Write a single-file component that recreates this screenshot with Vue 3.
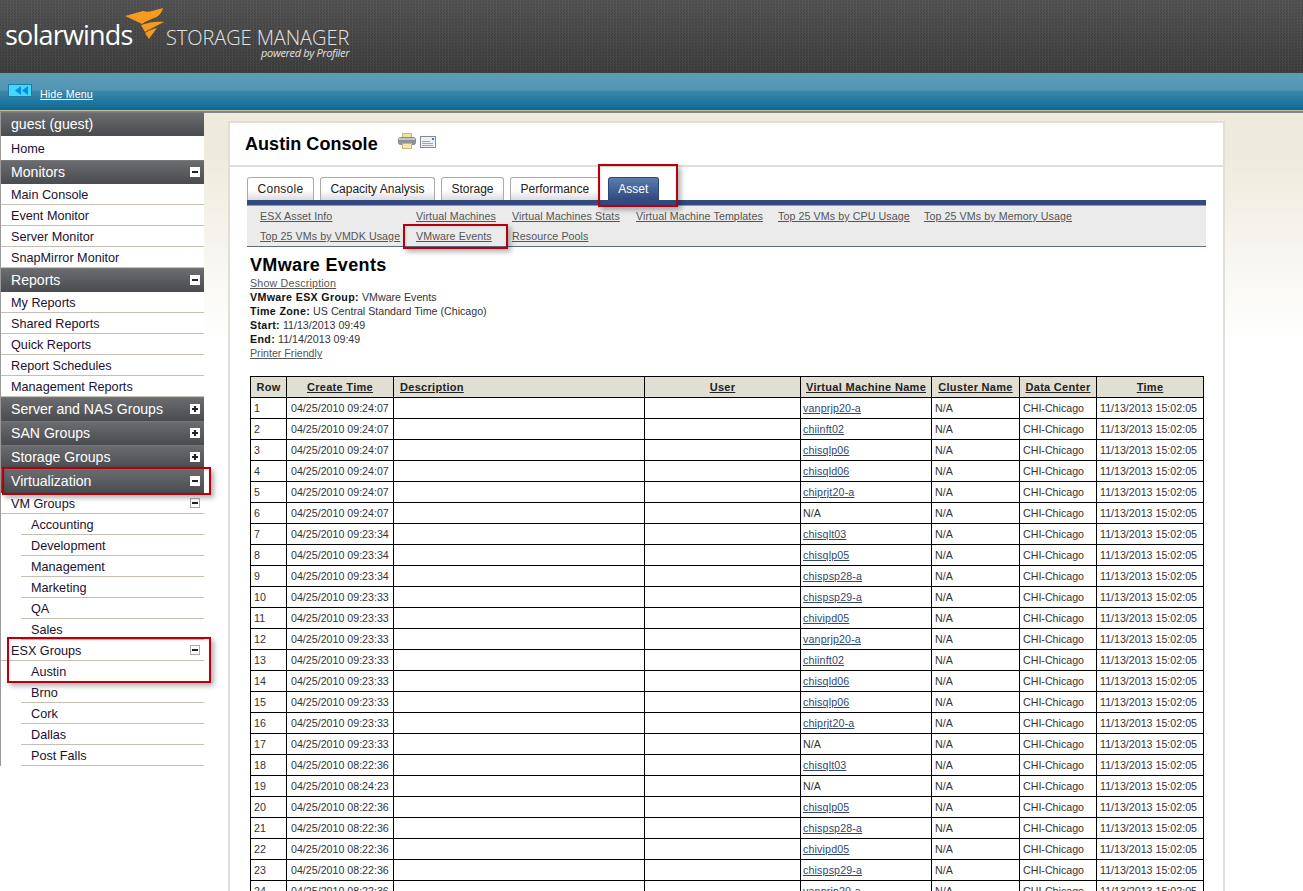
<script setup>
const monitors = ['Main Console', 'Event Monitor', 'Server Monitor', 'SnapMirror Monitor']
const reports = ['My Reports', 'Shared Reports', 'Quick Reports', 'Report Schedules', 'Management Reports']
const collapsed = ['Server and NAS Groups', 'SAN Groups', 'Storage Groups']
const vmGroups = ['Accounting', 'Development', 'Management', 'Marketing', 'QA', 'Sales']
const esxGroups = ['Austin', 'Brno', 'Cork', 'Dallas', 'Post Falls']
const tabs = ['Console', 'Capacity Analysis', 'Storage', 'Performance']
const subnav = [
  'ESX Asset Info', 'Virtual Machines', 'Virtual Machines Stats', 'Virtual Machine Templates', 'Top 25 VMs by CPU Usage', 'Top 25 VMs by Memory Usage',
  'Top 25 VMs by VMDK Usage', 'VMware Events', 'Resource Pools'
]
const heads = [
  { t: 'Row', plain: true },
  { t: 'Create Time' },
  { t: 'Description', left: true },
  { t: 'User' },
  { t: 'Virtual Machine Name' },
  { t: 'Cluster Name' },
  { t: 'Data Center' },
  { t: 'Time' }
]
const rows = [
  ['09:24:07', 'vanprjp20-a'], ['09:24:07', 'chiinft02'], ['09:24:07', 'chisqlp06'], ['09:24:07', 'chisqld06'],
  ['09:24:07', 'chiprjt20-a'], ['09:24:07', 'N/A'], ['09:23:34', 'chisqlt03'], ['09:23:34', 'chisqlp05'],
  ['09:23:34', 'chispsp28-a'], ['09:23:33', 'chispsp29-a'], ['09:23:33', 'chivipd05'], ['09:23:33', 'vanprjp20-a'],
  ['09:23:33', 'chiinft02'], ['09:23:33', 'chisqld06'], ['09:23:33', 'chisqlp06'], ['09:23:33', 'chiprjt20-a'],
  ['09:23:33', 'N/A'], ['08:22:36', 'chisqlt03'], ['08:24:23', 'N/A'], ['08:22:36', 'chisqlp05'],
  ['08:22:36', 'chispsp28-a'], ['08:22:36', 'chivipd05'], ['08:22:36', 'chispsp29-a'], ['08:22:36', 'vanprjp20-a']
]
</script>

<template>
  <div class="page">
    <header class="brand">
      <div class="logo">
        <span class="wordmark">solarwinds</span>
        <svg class="flame" width="42" height="34" viewBox="0 0 42 34">
          <path fill="#f79a1d" d="M0 8 L18 3 C22 4 24 4 27 3 L38 0 C37 5 33 9 29 10 C25 12 21 13 17 16 C11 13 5 10 0 8Z" />
          <path fill="#f79a1d" d="M16 17 C24 14 32 13 39 14 C33 17 27 20 20 24 Z" />
          <path fill="#f79a1d" d="M20 25 C25 22 28 21 32 20 C29 24 26 28 24 31 Z" />
        </svg>
        <div class="product">
          <span class="product-name">STORAGE MANAGER</span>
          <span class="powered">powered by Profiler</span>
        </div>
      </div>
    </header>
    <div class="menubar">
      <span class="arrows">
        <svg width="24" height="13" viewBox="0 0 24 13">
          <rect x="0.5" y="0.5" width="23" height="12" fill="#44d8ff" stroke="#1a7fa8" />
          <path fill="#0a8fe0" d="M7 6.5 L13 2 V11Z M14 6.5 L20 2 V11Z" />
        </svg>
      </span>
      <a class="hide">Hide Menu</a>
    </div>
    <div class="rule"></div>

    <div class="main">
      <aside class="side">
        <div class="sec">guest (guest)</div>
        <div class="home">Home</div>
        <div class="sec">Monitors<i class="box"><b></b></i></div>
        <div v-for="m in monitors" :key="m" class="item">{{ m }}</div>
        <div class="sec">Reports<i class="box"><b></b></i></div>
        <div v-for="r in reports" :key="r" class="item">{{ r }}</div>
        <div v-for="c in collapsed" :key="c" class="sec">{{ c }}<i class="box plus"><b></b></i></div>
        <div class="sec">Virtualization<i class="box"><b></b></i></div>
        <div class="item group">VM Groups<i class="box light"><b></b></i></div>
        <div v-for="g in vmGroups" :key="g" class="item sub">{{ g }}</div>
        <div class="item group">ESX Groups<i class="box light"><b></b></i></div>
        <div v-for="g in esxGroups" :key="g" class="item sub">{{ g }}</div>
      </aside>

      <section class="card">
        <div class="card-head">
          <h1>Austin Console</h1>
          <svg class="ico-print" width="18" height="16" viewBox="0 0 18 16">
            <rect x="4.5" y="0.5" width="9" height="5" fill="#efe2a0" stroke="#c9b878" />
            <rect x="0.5" y="4.5" width="17" height="7" rx="2" fill="#8f9298" stroke="#8a8a8e" />
            <rect x="1" y="5" width="16" height="2" fill="#c2c4c8" />
            <rect x="4.5" y="10.5" width="9" height="5" fill="#f3e8b0" stroke="#c9b878" />
          </svg>
          <svg class="ico-mail" width="16" height="12" viewBox="0 0 16 12">
            <rect x="0.5" y="0.5" width="15" height="11" fill="#eef1f4" stroke="#7f8a9a" />
            <rect x="12" y="2" width="2" height="2" fill="#3f78c8" />
            <path stroke="#a0a8b0" fill="none" d="M2 5.5H10M2 7.5H13M2 9.5H13" />
          </svg>
        </div>
        <div class="card-body">
          <nav class="tabs">
            <span v-for="t in tabs" :key="t" class="tab">{{ t }}</span>
            <span class="tab on">Asset</span>
          </nav>
          <div class="tabline"></div>
          <div class="subnav">
            <a v-for="s in subnav" :key="s">{{ s }}</a>
          </div>
          <div class="report">
            <h2>VMware Events</h2>
            <a class="lnk first">Show Description</a>
            <p><b>VMware ESX Group:</b> VMware Events</p>
            <p><b>Time Zone:</b> US Central Standard Time (Chicago)</p>
            <p><b>Start:</b> 11/13/2013 09:49</p>
            <p><b>End:</b> 11/14/2013 09:49</p>
            <a class="lnk">Printer Friendly</a>
          </div>
          <table class="grid">
            <colgroup>
              <col style="width:36px" /><col style="width:107px" /><col style="width:251px" /><col style="width:156px" />
              <col style="width:131px" /><col style="width:88px" /><col style="width:77px" /><col style="width:107px" />
            </colgroup>
            <thead>
              <tr>
                <th v-for="h in heads" :key="h.t" :class="{ left: h.left, plain: h.plain }"><span>{{ h.t }}</span></th>
              </tr>
            </thead>
            <tbody>
              <tr v-for="(r, i) in rows" :key="i">
                <td>{{ i + 1 }}</td>
                <td class="date">04/25/2010 {{ r[0] }}</td>
                <td></td>
                <td></td>
                <td class="vmcell"><a v-if="r[1] !== 'N/A'" class="vm">{{ r[1] }}</a><template v-else>N/A</template></td>
                <td>N/A</td>
                <td>CHI-Chicago</td>
                <td>11/13/2013 15:02:05</td>
              </tr>
            </tbody>
          </table>
        </div>
      </section>
    </div>

    <div class="mark m-asset"></div>
    <div class="mark m-events"></div>
    <div class="mark m-virt"></div>
    <div class="mark m-esx"></div>
  </div>
</template>

<style>
html, body { margin: 0; overflow: hidden; background: #fff; }
</style>

<style scoped>
.page {
  position: relative;
  width: 1303px;
  height: 891px;
  overflow: hidden;
  font-family: "Liberation Sans", Arial, sans-serif;
  color: #222;
  background: #fff;
}
.brand {
  height: 73px;
  box-sizing: border-box;
  background:
    conic-gradient(rgba(255,255,255,.04) 25%, rgba(0,0,0,.05) 0 50%, rgba(255,255,255,.04) 0 75%, rgba(0,0,0,.05) 0) 0 0 / 3px 3px,
    linear-gradient(#505050, #3a3a3a);
  padding: 8px 0 0 5px;
}
.logo { display: flex; align-items: flex-start; position: relative; height: 60px; }
.wordmark {
  font-family: "Open Sans", sans-serif;
  font-size: 27px;
  line-height: 32px;
  color: #fff;
  margin-top: 11px;
  width: 127px;
  letter-spacing: -.8px;
}
.flame { position: absolute; left: 120px; top: 0; }
.product { display: flex; flex-direction: column; align-items: flex-end; margin: 21px 0 0 34px; color: #e2e2e2; }
.product-name { font-family: "Open Sans", sans-serif; font-size: 20px; line-height: 18px; letter-spacing: -.08px; font-weight: 300; }
.powered { font-family: "Open Sans", sans-serif; font-style: italic; font-size: 11px; line-height: 12px; letter-spacing: -.35px; }

.menubar {
  height: 37px;
  box-sizing: border-box;
  background: linear-gradient(#5c9cb9 0, #5295b3 17px, #3e87a8 18px, #0b6a96 100%);
  display: flex;
  align-items: flex-start;
  padding: 11px 0 0 8px;
}
.arrows { display: block; height: 13px; }
.arrows svg { display: block; }
.hide { color: #fff; font-size: 10.67px; text-decoration: underline; margin: 4px 0 0 8px; line-height: 12px; letter-spacing: .15px; }
.rule { height: 3px; background: linear-gradient(#c2bc98 0 1px, #85858c 1px); }

.main {
  display: flex;
  align-items: flex-start;
  height: 778px;
  background: linear-gradient(#eeebdd 0, #eeebdd 40px, #fff 230px);
}
.side {
  width: 203px;
  border-left: 1px solid #9a9a9a;
  background: #fff;
  flex: none;
  margin-top: -1px;
}
.sec {
  position: relative;
  height: 24px;
  box-sizing: border-box;
  padding-left: 10px;
  font-size: 14.1px;
  line-height: 22px;
  color: #fff;
  background: linear-gradient(#6a6c70, #4a4b4e);
  border-top: 1px solid #777;
}
.home { height: 24px; line-height: 26px; padding-left: 10px; font-size: 12.67px; background: #fff; color: #1c1030; }
.item {
  position: relative;
  height: 21px;
  box-sizing: border-box;
  line-height: 22px;
  font-size: 12.67px;
  padding-left: 10px;
  border-bottom: 1px solid #c4bfb2;
  color: #1c1030;
}
.sub { margin-left: 20px; padding-left: 10px; }
.box {
  position: absolute;
  right: 4px;
  top: 6px;
  width: 10px;
  height: 10px;
  background: #fff;
  display: block;
}
.box b { position: absolute; left: 2px; top: 4px; width: 6px; height: 2px; background: #222; }
.plus::after { content: ""; position: absolute; left: 4px; top: 2px; width: 2px; height: 6px; background: #222; }
.light { top: 5px; box-sizing: border-box; width: 10px; height: 10px; border: 1px solid #aaa; }
.light b { left: 1px; top: 3px; }

.card {
  margin: 8px 0 0 24px;
  width: 993px;
  height: 800px;
  flex: none;
  background: #fff;
  border: 2px solid #dfdfd8;
  border-bottom: 0;
}
.card-head {
  height: 42px;
  border-bottom: 2px solid #dfdfd8;
  display: flex;
  align-items: flex-start;
  padding-left: 15px;
}
h1 { margin: 10px 0 0; font-size: 18px; line-height: 22px; font-weight: bold; color: #000; letter-spacing: .05px; }
.ico-print { margin: 10px 0 0 20px; }
.ico-mail { margin: 13px 0 0 4px; }
.card-body { padding: 10px 17px 0 17px; }
.tabs { display: flex; height: 23px; align-items: flex-end; }
.tab {
  height: 23px;
  box-sizing: border-box;
  margin-right: 6px;
  padding: 0 9.5px;
  font-size: 12px;
  line-height: 22px;
  color: #222;
  border: 1px solid #aaa;
  border-bottom: 0;
  border-radius: 3px 3px 0 0;
  background: linear-gradient(#fff, #fff 55%, #dcdcdc);
}
.tab:first-child { letter-spacing: .27px; }
.tab.on {
  margin-left: 2px;
  color: #fff;
  border-color: #2d4878;
  background: linear-gradient(#5a7cae, #30497f);
}
.tabline { height: 5px; background: #324a80; border-bottom: 1px solid #8f99ad; }
.subnav {
  height: 41px;
  box-sizing: border-box;
  background: #ebebeb;
  border-bottom: 1px solid #5e6b80;
  display: grid;
  grid-template-columns: 156px 96px 124px 142px 146px auto;
  grid-auto-rows: 20px;
  padding: 0 0 0 13px;
  font-size: 10.67px;
  line-height: 20px;
  letter-spacing: .09px;
  color: #555;
}
.subnav a { text-decoration: underline; white-space: nowrap; }
.report { padding: 9px 0 0 3px; font-size: 10.67px; line-height: 14px; height: 129px; box-sizing: border-box; color: #33333a; }
h2 { margin: 0; font-size: 18px; line-height: 18px; font-weight: bold; color: #000; letter-spacing: .35px; }
.lnk { display: block; text-decoration: underline; color: #555; }
.lnk.first { margin-top: 2px; letter-spacing: .2px; }
.report p { margin: 0; }
.report b { color: #111; letter-spacing: .35px; }
.grid {
  border-collapse: collapse;
  table-layout: fixed;
  width: 953px;
  margin-left: 3px;
  font-size: 10.67px;
  color: #333;
}
.grid th, .grid td { border: 1px solid #000; height: 20px; padding: 0 3px; white-space: nowrap; overflow: hidden; }
.grid td.date { padding-left: 4px; }
.grid td.vmcell { padding-left: 2px; }
.grid th { background: #e1dfd3; color: #222; font-size: 11px; text-align: center; letter-spacing: .3px; }
.grid th span { text-decoration: underline; }
.grid th.plain span { text-decoration: none; }
.grid th.left { text-align: left; padding-left: 6px; }
.vm { color: #34486e; text-decoration: underline; letter-spacing: .15px; }

.mark {
  position: absolute;
  box-sizing: border-box;
  border: 2px solid #b8000d;
  box-shadow: 3px 3px 5px rgba(0,0,0,.3), inset 1px 1px 3px rgba(0,0,0,.1);
  pointer-events: none;
}
.m-asset { left: 598px; top: 164px; width: 80px; height: 43px; }
.m-events { left: 403px; top: 224px; width: 105px; height: 25px; }
.m-virt { left: 2px; top: 467px; width: 209px; height: 28px; }
.m-esx { left: 7px; top: 637px; width: 204px; height: 46px; }
</style>
